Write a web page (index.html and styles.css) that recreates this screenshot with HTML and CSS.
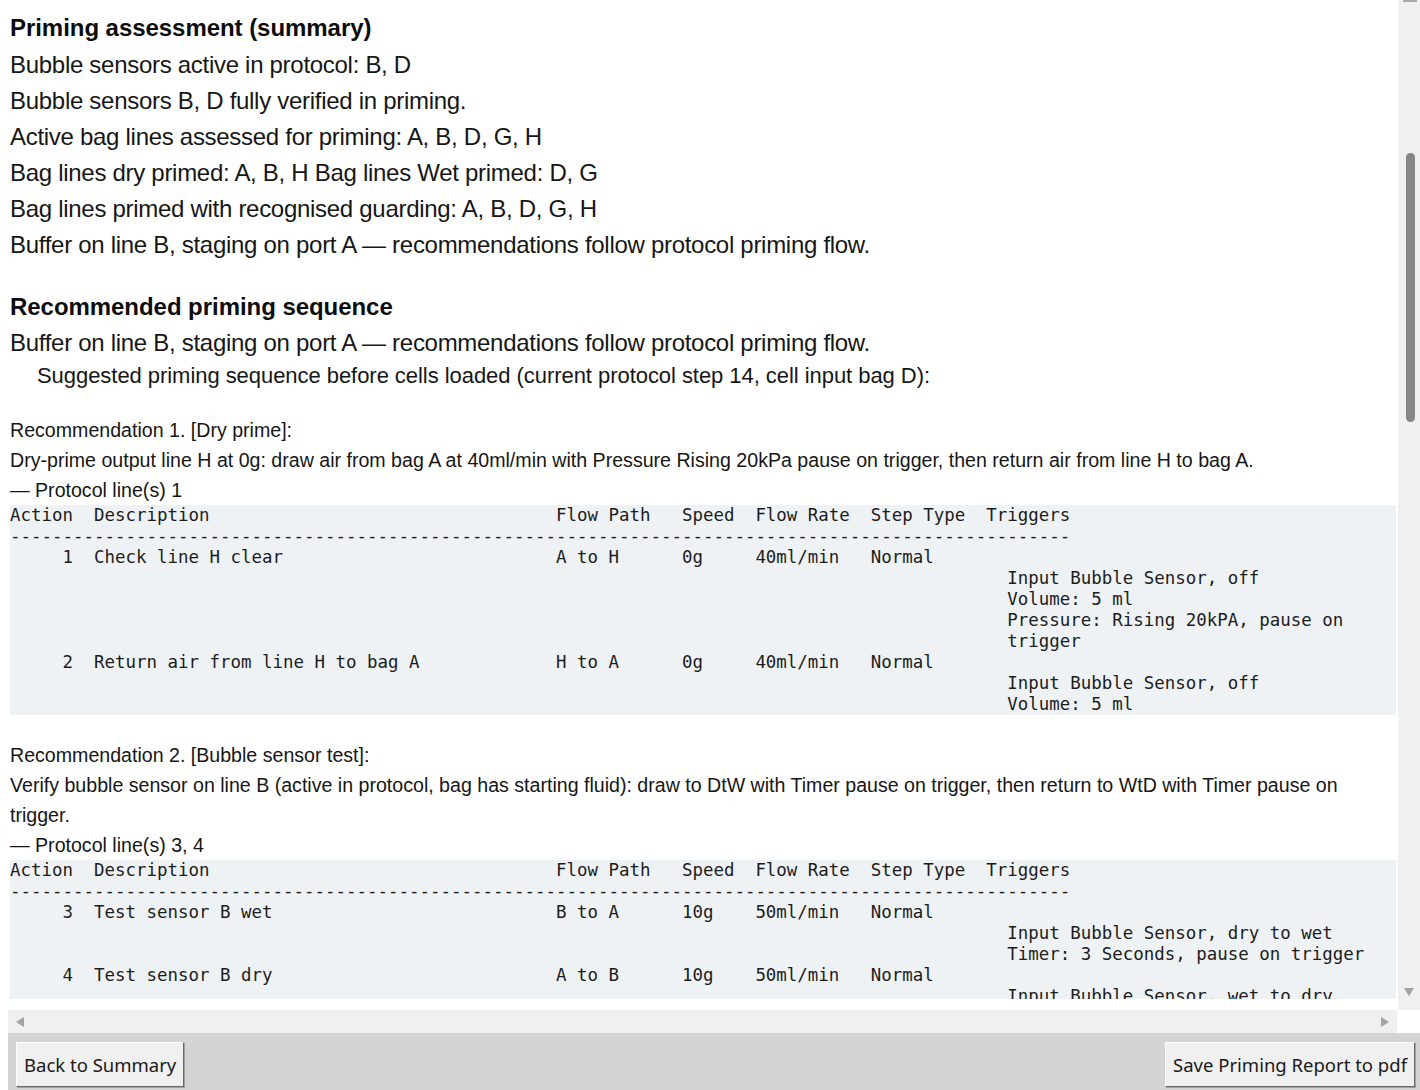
FILE: index.html
```html
<!DOCTYPE html>
<html lang="en">
<head>
  <meta charset="UTF-8">
  <title>Priming Report</title>
  <link rel="stylesheet" href="styles.css">
</head>
<body>
  <div class="app">
    <div class="viewport">
      <div class="content">
        <h2 class="title">Priming assessment (summary)</h2>
        <p class="line">Bubble sensors active in protocol: B, D</p>
        <p class="line">Bubble sensors B, D fully verified in priming.</p>
        <p class="line">Active bag lines assessed for priming: A, B, D, G, H</p>
        <p class="line">Bag lines dry primed: A, B, H Bag lines Wet primed: D, G</p>
        <p class="line">Bag lines primed with recognised guarding: A, B, D, G, H</p>
        <p class="line">Buffer on line B, staging on port A — recommendations follow protocol priming flow.</p>

        <h2 class="title second">Recommended priming sequence</h2>
        <p class="line lead">Buffer on line B, staging on port A — recommendations follow protocol priming flow.</p>
        <p class="intro">Suggested priming sequence before cells loaded (current protocol step 14, cell input bag D):</p>

        <div class="rec">
          <p>Recommendation 1. [Dry prime]:</p>
          <p>Dry-prime output line H at 0g: draw air from bag A at 40ml/min with Pressure Rising 20kPa pause on trigger, then return air from line H to bag A.</p>
          <p>— Protocol line(s) 1</p>
<pre class="steps">Action  Description                                 Flow Path   Speed  Flow Rate  Step Type  Triggers
-----------------------------------------------------------------------------------------------------
     1  Check line H clear                          A to H      0g     40ml/min   Normal
                                                                                               Input Bubble Sensor, off
                                                                                               Volume: 5 ml
                                                                                               Pressure: Rising 20kPA, pause on
                                                                                               trigger
     2  Return air from line H to bag A             H to A      0g     40ml/min   Normal
                                                                                               Input Bubble Sensor, off
                                                                                               Volume: 5 ml</pre>
        </div>

        <div class="rec">
          <p>Recommendation 2. [Bubble sensor test]:</p>
          <p>Verify bubble sensor on line B (active in protocol, bag has starting fluid): draw to DtW with Timer pause on trigger, then return to WtD with Timer pause on trigger.</p>
          <p>— Protocol line(s) 3, 4</p>
<pre class="steps">Action  Description                                 Flow Path   Speed  Flow Rate  Step Type  Triggers
-----------------------------------------------------------------------------------------------------
     3  Test sensor B wet                           B to A      10g    50ml/min   Normal
                                                                                               Input Bubble Sensor, dry to wet
                                                                                               Timer: 3 Seconds, pause on trigger
     4  Test sensor B dry                           A to B      10g    50ml/min   Normal
                                                                                               Input Bubble Sensor, wet to dry
                                                                                               Timer: 3 Seconds, pause on trigger</pre>
        </div>
      </div>

      <div class="vscroll">
        <div class="vs-up"></div>
        <div class="vs-thumb"></div>
        <div class="vs-down"></div>
      </div>
    </div>

    <div class="hbar">
      <div class="hscroll">
        <span class="arrow-left"></span>
        <span class="arrow-right"></span>
      </div>
      <div class="corner"></div>
    </div>

    <div class="buttonbar">
      <button class="btn">Back to Summary</button>
      <button class="btn">Save Priming Report to pdf</button>
    </div>
  </div>
</body>
</html>
```

FILE: styles.css
```css
body {
  margin: 0;
  background: #fff;
  color: #161616;
  font-family: "Liberation Sans", Arial, sans-serif;
  overflow: hidden;
}
.app {
  margin-left: 8px;
  height: 1090px;
  display: flex;
  flex-direction: column;
}
.viewport {
  display: flex;
  height: 1010px;
}
.content {
  width: 1390px;
  height: 1010px;
  box-sizing: border-box;
  padding: 9px 2px 0 2px;
  border-bottom: 11px solid #fff;
  overflow: hidden;
}
p {
  margin: 0;
}
.title {
  margin: 0;
  font-size: 24px;
  line-height: 38px;
  letter-spacing: -0.05px;
  font-weight: bold;
  color: #0d0d0d;
}
.second {
  margin-top: 25px;
}
.line {
  font-size: 24px;
  line-height: 36px;
  letter-spacing: -0.29px;
}
.lead {
  line-height: 34px;
}
.intro {
  padding-left: 27px;
  font-size: 22px;
  line-height: 32px;
  letter-spacing: -0.05px;
}
.rec {
  margin-top: 23px;
  font-size: 19.6px;
  line-height: 30px;
  letter-spacing: 0;
}
.rec + .rec {
  margin-top: 25px;
}
.steps {
  margin: 0;
  background: #eef2f5;
  font-family: "DejaVu Sans Mono", "Liberation Mono", monospace;
  font-size: 17.45px;
  line-height: 21px;
  letter-spacing: 0;
  color: #1c1c1c;
}

/* scrollbars */
.vscroll {
  width: 22px;
  height: 1010px;
  background: #f0f0f0;
  display: flex;
  flex-direction: column;
}
.vs-up {
  width: 14px;
  height: 2px;
  margin-left: 5px;
  background: #a6a6a6;
}
.vs-thumb {
  width: 9px;
  height: 269px;
  margin: 151px 0 0 8px;
  border-radius: 5px;
  background: #868686;
}
.vs-down {
  width: 0;
  height: 0;
  margin: 566px 0 0 6px;
  border-left: 5px solid transparent;
  border-right: 5px solid transparent;
  border-top: 8px solid #a3a3a3;
}
.hbar {
  display: flex;
  height: 23px;
}
.hscroll {
  flex: 1;
  background: #f0f0f0;
  display: flex;
  align-items: center;
  justify-content: space-between;
  padding: 0 8px 0 8px;
}
.arrow-left {
  width: 0;
  height: 0;
  border-top: 5px solid transparent;
  border-bottom: 5px solid transparent;
  border-right: 8px solid #a3a3a3;
}
.arrow-right {
  width: 0;
  height: 0;
  border-top: 5px solid transparent;
  border-bottom: 5px solid transparent;
  border-left: 8px solid #a3a3a3;
}
.corner {
  width: 23px;
  background: #fff;
}

/* bottom buttons */
.buttonbar {
  flex: 1;
  background: #d4d4d4;
  display: flex;
  justify-content: space-between;
  align-items: flex-start;
  padding: 9px 5px 0 8px;
}
.btn {
  height: 45px;
  padding: 0 7px;
  background: #f0f0f0;
  border: 1px solid #fdfdfd;
  border-right-color: #6a6a6a;
  border-bottom-color: #6a6a6a;
  box-shadow: 1px 1px 0 #a0a0a0;
  font-family: "Noto Sans", "Open Sans", sans-serif;
  font-size: 18.5px;
  color: #1a1a1a;
}
```
